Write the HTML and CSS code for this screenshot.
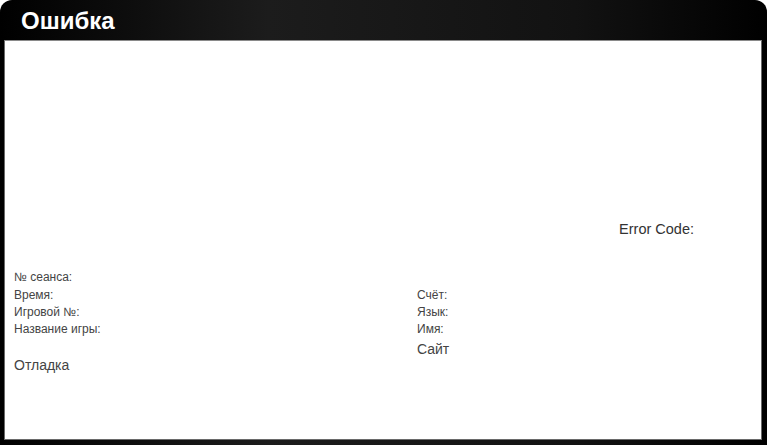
FILE: index.html
```html
<!DOCTYPE html>
<html lang="ru">
<head>
<meta charset="utf-8">
<title>Ошибка</title>
<link rel="stylesheet" href="styles.css">
</head>
<body>
<div class="window">
  <div class="titlebar"><h1 class="title">Ошибка</h1></div>
  <div class="content">
    <div class="message">
      <div class="error-code">Error Code:</div>
    </div>
    <div class="info">
      <div class="col col-left">
        <div class="row first">№ сеанса:</div>
        <div class="row">Время:</div>
        <div class="row">Игровой №:</div>
        <div class="row">Название игры:</div>
        <div class="debug">Отладка</div>
      </div>
      <div class="col col-right">
        <div class="row">Счёт:</div>
        <div class="row">Язык:</div>
        <div class="row">Имя:</div>
        <div class="site">Сайт</div>
      </div>
    </div>
  </div>
</div>
</body>
</html>
```
FILE: styles.css
```css
html, body {
  margin: 0;
  padding: 0;
  background: #fff;
}
.window {
  width: 767px;
  height: 445px;
  box-sizing: border-box;
  display: flex;
  flex-direction: column;
  padding: 0 5px 5px 4px;
  border-radius: 12px 12px 0 0;
  background: linear-gradient(to right, #000 0%, #1c1c1c 35%, #121212 75%, #000 100%);
  font-family: "Liberation Sans", Arial, sans-serif;
}
.titlebar {
  height: 40px;
  flex: none;
  display: flex;
  align-items: center;
  padding-left: 17px;
}
.title {
  margin: 0;
  padding-top: 2px;
  color: #fff;
  font-size: 24px;
  font-weight: bold;
  line-height: 1;
}
.content {
  flex: 1;
  background: #fff;
  border-top: 1px solid #8a8a8a;
  border-left: 1px solid #6a6a6a;
  border-right: 1px solid #6a6a6a;
  border-bottom: 1px solid #6a6a6a;
  box-sizing: border-box;
  padding: 0 9px;
  color: #444;
}
.message {
  height: 196px;
  display: flex;
  align-items: flex-end;
  justify-content: flex-end;
  padding-right: 58px;
}
.error-code {
  font-size: 14.5px;
  line-height: 16px;
  color: #333;
}
.info {
  margin-top: 31px;
  display: grid;
  grid-template-columns: 403px 1fr;
}
.row {
  font-size: 12px;
  line-height: 17px;
}
.row.first {
  line-height: 19px;
}
.col-right {
  padding-top: 19px;
}
.debug {
  margin-top: 19px;
  font-size: 14px;
  line-height: 17px;
}
.site {
  font-size: 14px;
  line-height: 22px;
}
```
